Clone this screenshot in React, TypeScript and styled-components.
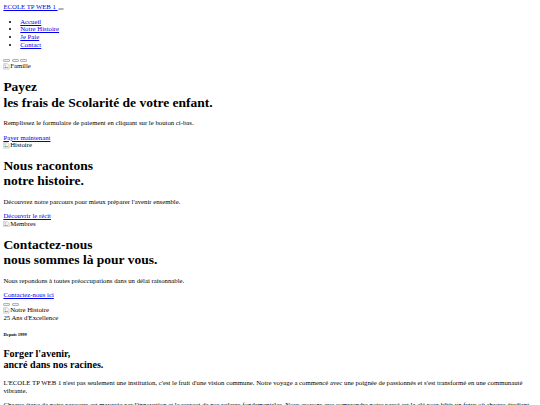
import React from "react";
import styled, { createGlobalStyle } from "styled-components";

// plain, unstyled document seen at a 1280px page width shrunk into 540px
const S = 540 / 1280;
const px = (n: number) => `${n * S}px`;

const GlobalStyle = createGlobalStyle`
  html, body {
    background: #ffffff;
  }
  body {
    margin: ${px(8)};
    font-family: "Liberation Serif", "Times New Roman", serif;
    font-size: ${px(16)};
    line-height: ${px(18)};
    color: #000000;
  }
  a {
    color: #0000ee;
  }
`;

const Header = styled.nav`
  display: block;
`;

const Brand = styled.a`
  color: #0000ee;
`;

const PlainButton = styled.button`
  display: inline-block;
  width: ${px(16)};
  height: ${px(6)};
  padding: 0;
  margin: 0;
  vertical-align: baseline;
  border: 1px solid #b4b4b4;
  border-radius: 1px;
  background: #efefef;
`;

const NavList = styled.ul`
  margin: ${px(16)} 0;
  padding-left: ${px(40)};
  list-style: disc;
`;

const NavItem = styled.li`
  display: list-item;
`;

const Carousel = styled.div`
  display: block;
`;

const Indicators = styled.div`
  display: block;
`;

const Slide = styled.div`
  display: block;
`;

const Caption = styled.div`
  display: block;
`;

const Title = styled.h1`
  font-size: ${px(32)};
  line-height: ${px(37)};
  font-weight: 700;
  margin: ${px(21.44)} 0;
`;

const Text = styled.p`
  margin: ${px(16)} 0;
`;

const Controls = styled.div`
  display: block;
`;

const ImageWrap = styled.span`
  display: inline;
`;

const ImageIcon = styled.svg`
  width: ${px(16)};
  height: ${px(16)};
  vertical-align: ${px(-3)};
`;

const About = styled.section`
  display: block;
`;

const Badge = styled.div`
  display: block;
`;

const Kicker = styled.h6`
  font-size: ${px(10.72)};
  line-height: ${px(12)};
  font-weight: 700;
  margin: ${px(24.98)} 0;
`;

const Subtitle = styled.h2`
  font-size: ${px(24)};
  line-height: ${px(27)};
  font-weight: 700;
  margin: ${px(19.92)} 0;
`;

function BrokenImage({ alt }: { alt: string }) {
  return (
    <ImageWrap>
      <ImageIcon viewBox="0 0 16 16">
        <path d="M1.5 1.5h9l4 4v9h-13z" fill="#f4f4f4" stroke="#9a9a9a" />
        <path d="M3 12l3-4 2.5 3 1.5-1.5 2.5 2.5z" fill="#4caf50" />
        <circle cx="5" cy="5" r="1.3" fill="#6fa8dc" />
      </ImageIcon>
      {alt}
    </ImageWrap>
  );
}

const slides = [
  {
    alt: "Famille",
    lines: ["Payez", "les frais de Scolarité de votre enfant."],
    text: "Remplissez le formulaire de paiement en cliquant sur le bouton ci-bas.",
    link: "Payer maintenant",
  },
  {
    alt: "Histoire",
    lines: ["Nous racontons", "notre histoire."],
    text: "Découvrez notre parcours pour mieux préparer l'avenir ensemble.",
    link: "Découvrir le récit",
  },
  {
    alt: "Membres",
    lines: ["Contactez-nous", "nous sommes là pour vous."],
    text: "Nous repondons à toutes préoccupations dans un délai raisonnable.",
    link: "Contactez-nous ici",
  },
];

export default function App() {
  return (
    <>
      <GlobalStyle />
      <Header>
        <Brand href="#">{"ECOLE TP WEB 1 "}</Brand>
        <PlainButton type="button" aria-label="menu" />
        <NavList>
          <NavItem><a href="#">Accueil</a></NavItem>
          <NavItem><a href="#">Notre Histoire</a></NavItem>
          <NavItem><a href="#">Je Paie</a></NavItem>
          <NavItem><a href="#">Contact</a></NavItem>
        </NavList>
      </Header>

      <Carousel>
        <Indicators>
          <PlainButton type="button" /> <PlainButton type="button" /> <PlainButton type="button" />
        </Indicators>
        {slides.map((s) => (
          <Slide key={s.alt}>
            <BrokenImage alt={s.alt} />
            <Caption>
              <Title>
                {s.lines[0]}
                <br />
                {s.lines[1]}
              </Title>
              <Text>{s.text}</Text>
              <a href="#">{s.link}</a>
            </Caption>
          </Slide>
        ))}
        <Controls>
          <PlainButton type="button" /> <PlainButton type="button" />
        </Controls>
      </Carousel>

      <About>
        <BrokenImage alt="Notre Histoire" />
        <Badge>25 Ans d'Excellence</Badge>
        <Kicker>Depuis 1999</Kicker>
        <Subtitle>
          Forger l'avenir,
          <br />
          ancré dans nos racines.
        </Subtitle>
        <Text>
          L'ECOLE TP WEB 1 n'est pas seulement une institution, c'est le fruit d'une vision commune. Notre
          voyage a commencé avec une poignée de passionnés et s'est transformé en une communauté vibrante.
        </Text>
        <Text>
          Chaque étape de notre parcours est marquée par l'innovation et le respect de nos valeurs
          fondamentales. Nous croyons que comprendre notre passé est la clé pour bâtir un futur où chaque
          étudiant trouve sa place et réalise son potentiel.
        </Text>
      </About>
    </>
  );
}
